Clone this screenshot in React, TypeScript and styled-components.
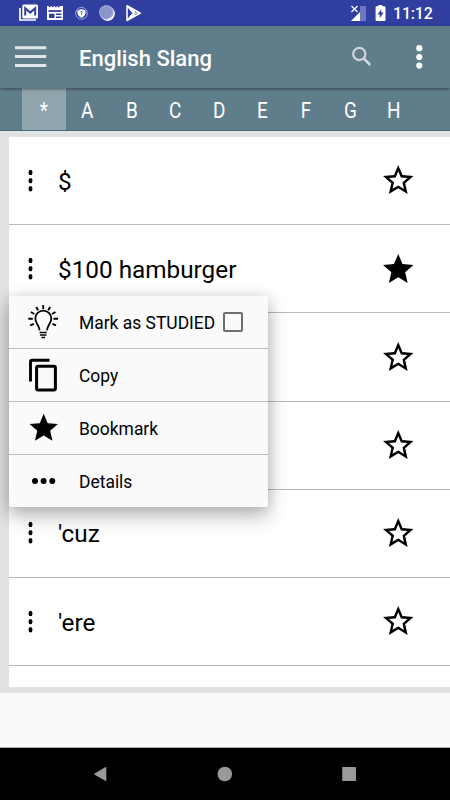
import React from "react";
import styled, { createGlobalStyle } from "styled-components";

const Global = createGlobalStyle`
  * { box-sizing: border-box; }
  body { margin: 0; background: #fafafa; font-family: Roboto, "Liberation Sans", sans-serif; }
  svg { display: block; flex: none; }
`;

const Screen = styled.div`
  width: 450px;
  height: 800px;
  overflow: hidden;
  display: flex;
  flex-direction: column;
  background: #fafafa;
`;

const StatusBar = styled.header`
  height: 26px;
  flex: none;
  display: flex;
  align-items: center;
  justify-content: space-between;
  background: #303f9f;
  color: #fff;
`;

const Clock = styled.time`
  width: 57px;
  padding: 2px 0 0 0;
  font-size: 16px;
  font-weight: 500;
  line-height: 26px;
  letter-spacing: -0.2px;
`;

const StatusGroup = styled.div`
  display: flex;
  align-items: center;
`;

const Toolbar = styled.div`
  height: 62px;
  flex: none;
  display: flex;
  align-items: center;
  padding-left: 15px;
  background: #607d8b;
  position: relative;
  box-shadow: 0 1px 3px rgba(0, 0, 0, 0.45);
`;

const Title = styled.h1`
  margin: 4px 0 0 32px;
  width: 271px;
  font-size: 22px;
  font-weight: 500;
  line-height: 30px;
  color: #fff;
  white-space: nowrap;
`;

const Tabs = styled.nav`
  height: 43px;
  flex: none;
  display: flex;
  padding-left: 22px;
  background: #607d8b;
  border-bottom: 1px solid #45707f;
`;

const Tab = styled.div<{ $active?: boolean }>`
  width: 43.75px;
  display: flex;
  justify-content: center;
  line-height: 45px;
  font-size: 22px;
  color: #fff;
  background: ${(p) => (p.$active ? "#90a4ae" : "transparent")};
`;

const Letter = styled.span`
  transform: scaleX(0.86);
`;

const Content = styled.main`
  position: relative;
  height: 562px;
  flex: none;
  padding: 6px 0 6px 9px;
  background: #e2e2e2;
`;

const List = styled.div`
  height: 550px;
  overflow: hidden;
  background: #fff;
`;

const Row = styled.div`
  height: 88.2px;
  display: flex;
  align-items: center;
  padding-left: 17px;
  border-bottom: 1px solid #b9b9b9;
`;

const Word = styled.span`
  width: 321.7px;
  margin-left: 23px;
  padding-top: 2px;
  font-size: 24.3px;
  line-height: 30px;
  color: #000;
`;

const Menu = styled.div`
  position: absolute;
  left: 9px;
  top: 165px;
  width: 259px;
  height: 211px;
  display: grid;
  grid-template-rows: 52px 53px 53px 53px;
  border-radius: 2px;
  background: #fafafa;
  box-shadow: 0 10px 20px rgba(0, 0, 0, 0.24), 0 1px 15px rgba(0, 0, 0, 0.16);
`;

const MenuItem = styled.div`
  display: flex;
  align-items: center;
  padding-left: 18px;
  font-size: 17.45px;
  color: #000;
  & + & { border-top: 1px solid #b5bfc5; }
`;

const MenuIcon = styled.span`
  width: 32px;
  flex: none;
  display: flex;
  justify-content: center;
`;

const MenuLabel = styled.span`
  margin-left: 20px;
  padding-top: 1px;
  white-space: nowrap;
`;

const Checkbox = styled.span`
  width: 20px;
  height: 20px;
  margin-left: 8px;
  border: 2px solid #6f6f6f;
  border-radius: 2px;
`;

const NavBar = styled.footer`
  height: 53px;
  margin-top: auto;
  border-top: 1px solid #a8a8a8;
  display: flex;
  align-items: center;
  background: #000;
  padding-left: 88px;
  gap: 100px;
`;

const STAR =
  "M12 17.27 18.18 21l-1.64-7.03L22 9.24l-7.19-.61L12 2 9.19 8.63 2 9.24l5.46 4.73L5.82 21z";
const STAR_OUTLINE =
  "M22 9.24l-7.19-.62L12 2 9.19 8.63 2 9.24l5.46 4.73L5.82 21 12 17.27 18.18 21l-1.63-7.03zM12 15.4l-3.76 2.27 1-4.28-3.32-2.88 4.38-.38L12 6.1l1.71 4.04 4.38.38-3.32 2.88 1 4.28z";

function Star({ filled, size = 36.5 }: { filled?: boolean; size?: number }) {
  return (
    <svg width={size} height={size} viewBox="0 0 24 24">
      <path d={filled ? STAR : STAR_OUTLINE} />
    </svg>
  );
}

function Handle() {
  return (
    <svg width="9" height="24" viewBox="0 0 9 24">
      <ellipse cx="4.5" cy="3.4" rx="2" ry="2.7" />
      <ellipse cx="4.5" cy="11.6" rx="2" ry="2.7" />
      <ellipse cx="4.5" cy="19.8" rx="2" ry="2.7" />
    </svg>
  );
}

function Bulb() {
  return (
    <svg width="32" height="36" viewBox="0 0 32 36" fill="none" stroke="#000" strokeWidth="1.8">
      <path d="M12.6 26.4C12.4 21.5 8.3 19.5 8.3 14.6a8 8 0 0 1 16 0c0 4.9-4.1 6.9-4.3 11.8" />
      <path d="M12.6 28.6h7.2M12.9 31h6.6M14.4 33.4h3.6" strokeWidth="1.5" />
      <path
        d="M16.2 1v4M9.3 3l1.8 3.2M23.1 3l-1.8 3.2M3.9 8l3.5 2M28.5 8 25 10M1.3 14.7h4.5M31 14.7h-4.5M3.2 21.4l3.6-1.5M29 21.4l-3.6-1.5"
        strokeWidth="1.9"
      />
    </svg>
  );
}

function Copy() {
  return (
    <svg width="32" height="36" viewBox="0 0 32 36" fill="none" stroke="#000">
      <path d="M3.5 24.5V4.7q0-1.5 1.5-1.5H22.5" strokeWidth="2.9" />
      <rect x="9.6" y="9.2" width="18.8" height="23.7" rx="1.5" strokeWidth="3" />
    </svg>
  );
}

function Notifications() {
  return (
    <svg width="150" height="26" viewBox="0 0 150 26">
      <path d="M20 8v12h16" fill="none" stroke="#fff" strokeWidth="1.7" />
      <rect x="22.3" y="4.5" width="15.7" height="14" rx="1.5" fill="#fff" />
      <path d="M25.2 15.5V8.2l5 4.4 5-4.4v7.3" fill="none" stroke="#303f9f" strokeWidth="2" />
      <path d="M47 6h1.4l1.4 1.6L51.3 6l1.5 1.6L54.3 6l1.5 1.6L57.3 6l1.5 1.6L60.2 6H63v14H47z" fill="#fff" />
      <path d="M48.5 11h13" stroke="#303f9f" strokeWidth="1.8" />
      <path d="M49 13.7h5.5v4.3H49z" fill="#303f9f" />
      <path d="M56 14.2h5.5M56 17.2h5.5" stroke="#303f9f" strokeWidth="1.4" />
      <circle cx="81.5" cy="13.3" r="5.9" fill="none" stroke="#aeb6df" strokeWidth="0.9" />
      <path d="M77.4 10.4l4.1-1.5 4.1 1.5v2.2q0 3.5-4.1 5.4-4.1-1.9-4.1-5.4z" fill="#fff" />
      <path d="M80.5 11.8q1.8-1 1.8.3 0 .7-.8 1.2v1.5" fill="none" stroke="#303f9f" strokeWidth="0.8" />
      <circle cx="107.6" cy="13.6" r="7.3" fill="#fff" />
      <circle cx="106.3" cy="12.3" r="7.1" fill="#8c95cb" />
      <circle cx="106.3" cy="12.3" r="6.6" fill="none" stroke="#b5bbdf" strokeDasharray="1.2 1.4" strokeWidth="1.2" />
      <path d="M127 5.8v14.8l6.3-7.5zM127 5.8l13.3 7.3L127 20.6" fill="none" stroke="#fff" strokeWidth="1.6" strokeLinejoin="round" />
      <path d="M127 5.5l6.3 7.6-6.3 7.4 10-5.4-3-2 3-2z" fill="#fff" />
      <path d="M136.8 10.9l3.9 2.2-3.9 2.2-2-2.2z" fill="#fff" />
      <path d="M134.8 10.8l2.2 2.3-2.2 2.3" fill="none" stroke="#303f9f" strokeWidth="0.6" />
      <path d="M128 8.3v9.5l4-4.7z" fill="#303f9f" />
    </svg>
  );
}

function SystemStatus() {
  return (
    <svg width="43" height="26" viewBox="350 0 43 26">
      <path d="M366 6v15h-15z" fill="#6e79bc" />
      <path d="M360 6h6v15h-6z" fill="#6e79bc" />
      <path d="M360 12v9h-9z" fill="#fff" />
      <path d="M351.5 6l6 6M357.5 6l-6 6" stroke="#fff" strokeWidth="1.3" />
      <path d="M376.5 6.3h1.8V5h4v1.3h2.3q.9 0 .9.9V20q0 1-.9 1h-8q-1 0-1-1V7.2q0-.9.9-.9z" fill="#fff" />
      <path d="M381.3 9.3l-3.8 5.3h2.3V18l3.8-5.4h-2.3z" fill="#303f9f" />
    </svg>
  );
}

function Burger() {
  return (
    <svg width="32" height="24" viewBox="0 0 32 24">
      <path d="M0 2.8h31.3M0 11.6h31.3M0 20.4h31.3" stroke="#dfe5e8" strokeWidth="3" />
    </svg>
  );
}

function ToolbarActions() {
  return (
    <svg width="100" height="62" viewBox="350 26 100 62">
      <circle cx="359.3" cy="54" r="6.1" fill="none" stroke="#cfd8dc" strokeWidth="2.2" />
      <path d="M363.7 58.4l6.5 6.6" stroke="#cfd8dc" strokeWidth="2.6" />
      <g fill="#fff">
        <circle cx="419.3" cy="48.2" r="3.1" />
        <circle cx="419.3" cy="57" r="3.1" />
        <circle cx="419.3" cy="65.6" r="3.1" />
      </g>
    </svg>
  );
}

const WORDS = [
  { text: "$" },
  { text: "$100 hamburger", starred: true },
  { text: "" },
  { text: "" },
  { text: "'cuz" },
  { text: "'ere" },
];

export default function App() {
  return (
    <>
      <Global />
      <Screen>
        <StatusBar>
          <Notifications />
          <StatusGroup>
            <SystemStatus />
            <Clock>11:12</Clock>
          </StatusGroup>
        </StatusBar>
        <Toolbar>
          <Burger />
          <Title>English Slang</Title>
          <ToolbarActions />
        </Toolbar>
        <Tabs>
          {["*", "A", "B", "C", "D", "E", "F", "G", "H"].map((l) => (
            <Tab key={l} $active={l === "*"}>
              <Letter>{l}</Letter>
            </Tab>
          ))}
        </Tabs>
        <Content>
          <List>
            {WORDS.map((w, i) => (
              <Row key={i}>
                <Handle />
                <Word>{w.text}</Word>
                <Star filled={w.starred} />
              </Row>
            ))}
          </List>
          <Menu>
            <MenuItem>
              <MenuIcon>
                <Bulb />
              </MenuIcon>
              <MenuLabel>Mark as STUDIED</MenuLabel>
              <Checkbox />
            </MenuItem>
            <MenuItem>
              <MenuIcon>
                <Copy />
              </MenuIcon>
              <MenuLabel>Copy</MenuLabel>
            </MenuItem>
            <MenuItem>
              <MenuIcon>
                <svg width="34" height="34" viewBox="-0.5 0 24 24">
                  <path d={STAR} />
                </svg>
              </MenuIcon>
              <MenuLabel>Bookmark</MenuLabel>
            </MenuItem>
            <MenuItem>
              <MenuIcon>
                <svg width="32" height="36" viewBox="0 0 32 36">
                  <circle cx="8" cy="18" r="3" />
                  <circle cx="16.6" cy="18" r="3" />
                  <circle cx="25.3" cy="18" r="3" />
                </svg>
              </MenuIcon>
              <MenuLabel>Details</MenuLabel>
            </MenuItem>
          </Menu>
        </Content>
        <NavBar>
          <svg width="25" height="25" viewBox="0 0 25 25">
            <path d="M18.3 5.2v13.6q0 .7-.6.3L6.6 12.7q-.9-.6 0-1.2l11-6.5q.7-.3.7.2z" fill="#999" />
          </svg>
          <svg width="25" height="25" viewBox="0 0 25 25">
            <circle cx="11.8" cy="12" r="7.3" fill="#999" />
          </svg>
          <svg width="25" height="25" viewBox="0 0 25 25">
            <rect x="4.2" y="5.1" width="13.8" height="13.9" rx="0.8" fill="#999" />
          </svg>
        </NavBar>
      </Screen>
    </>
  );
}
